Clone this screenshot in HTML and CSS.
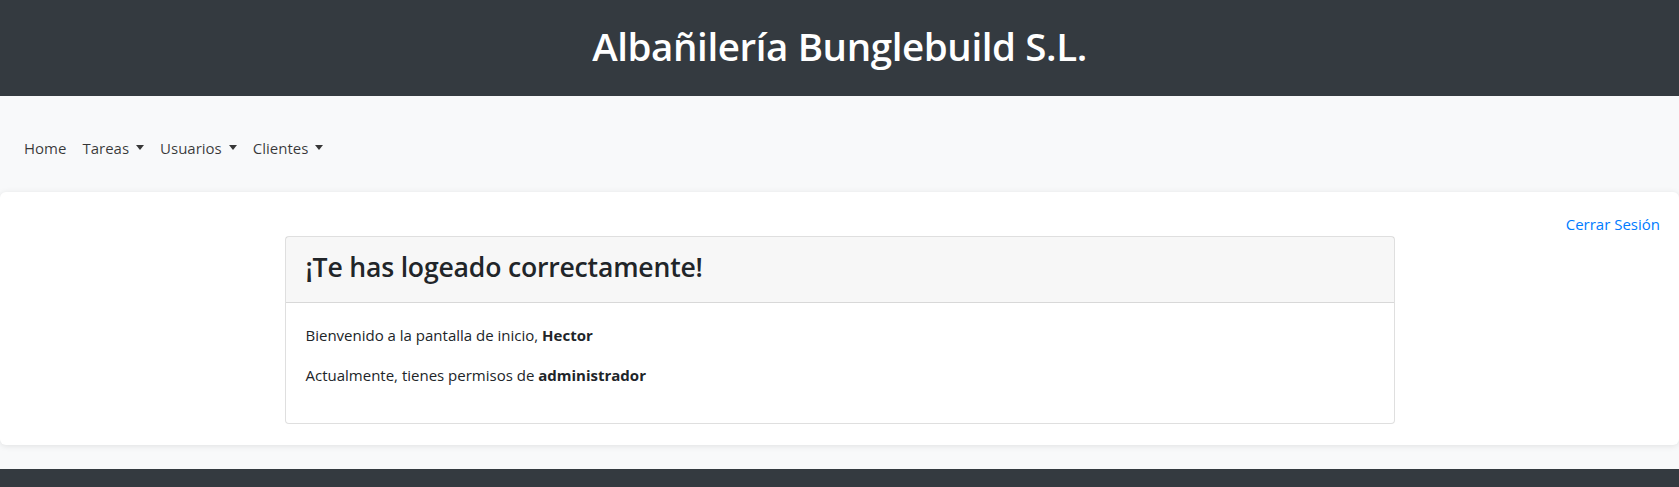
FILE: index.html
```html
<!DOCTYPE html>
<html lang="es">
<head>
<meta charset="utf-8">
<title>Albañilería Bunglebuild S.L.</title>
<link rel="stylesheet" href="styles.css">
</head>
<body>
<header class="site-header">
  <h1 class="site-title">Albañilería Bunglebuild S.L.</h1>
</header>
<nav class="navbar">
  <ul class="nav-list">
    <li><a class="nav-link" href="#">Home</a></li>
    <li><a class="nav-link dropdown-toggle" href="#">Tareas</a></li>
    <li><a class="nav-link dropdown-toggle" href="#">Usuarios</a></li>
    <li><a class="nav-link dropdown-toggle" href="#">Clientes</a></li>
  </ul>
</nav>
<main class="main-panel">
  <div class="logout-row"><a class="logout-link" href="#">Cerrar Sesión</a></div>
  <div class="container">
    <section class="card">
      <div class="card-header">
        <h2 class="card-title">¡Te has logeado correctamente!</h2>
      </div>
      <div class="card-body">
        <p>Bienvenido a la pantalla de inicio, <strong>Hector</strong></p>
        <p>Actualmente, tienes permisos de <strong>administrador</strong></p>
      </div>
    </section>
  </div>
</main>
<footer class="site-footer"></footer>
</body>
</html>
```

FILE: styles.css
```css
* { box-sizing: border-box; }
html, body { margin: 0; padding: 0; }
body {
  font-family: "Open Sans", "Noto Sans", "Liberation Sans", sans-serif;
  font-size: 15px;
  line-height: 24px;
  color: #212529;
  background: #f8f9fa;
}
.site-header {
  background: #343a40;
  height: 96px;
  display: flex;
  align-items: center;
  justify-content: center;
  padding-bottom: 4px;
}
.site-title {
  margin: 0;
  color: #fff;
  font-size: 38.5px;
  font-weight: 600;
  line-height: 1.2;
  letter-spacing: -0.4px;
}
.navbar {
  height: 96px;
  background: #f8f9fa;
  display: flex;
  align-items: center;
  padding: 0 16px;
}
.nav-list {
  list-style: none;
  margin: 0;
  padding: 0;
  display: flex;
  margin-top: 8px;
}
.nav-link {
  display: block;
  padding: 8px 8px;
  color: rgba(0,0,0,.78);
  text-decoration: none;
}
.dropdown-toggle::after {
  content: "";
  display: inline-block;
  margin-left: 7px;
  vertical-align: 4px;
  border-top: 5px solid;
  border-right: 4px solid transparent;
  border-left: 4px solid transparent;
}
.main-panel {
  background: #fff;
  border-radius: 6px;
  box-shadow: 0 1px 6px rgba(0,0,0,.1);
  padding: 20px 0 21px;
}
.logout-row {
  display: flex;
  justify-content: flex-end;
  padding-right: 19px;
}
.logout-link {
  color: #007bff;
  text-decoration: none;
}
.container {
  max-width: 1140px;
  margin: 0 auto;
  padding: 0 15px;
}
.card {
  border: 1px solid rgba(0,0,0,.125);
  border-radius: 4px;
  background: #fff;
}
.card-header {
  background: rgba(0,0,0,.03);
  border-bottom: 1px solid rgba(0,0,0,.125);
  padding: 10px 20px 14px;
  height: 66px;
  display: flex;
  align-items: center;
}
.card-title {
  margin: 0;
  font-size: 26.6px;
  font-weight: 600;
  line-height: 1.2;
  letter-spacing: -0.2px;
}
.card-body {
  padding: 20px;
}
.card-body p {
  margin: 0 0 16px;
}
.card-body strong { font-weight: 700; }
.site-footer {
  margin-top: 24px;
  height: 18px;
  background: #343a40;
}
```
